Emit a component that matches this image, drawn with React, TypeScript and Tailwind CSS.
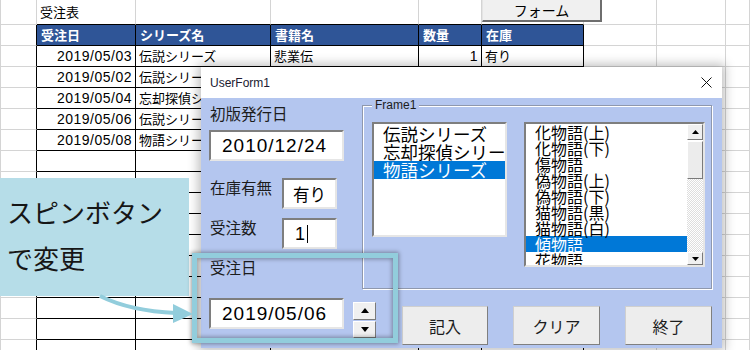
import React from 'react';

const HEADER = ['受注日', 'シリーズ名', '書籍名', '数量', '在庫'];
const DATA = [
  ['2019/05/03', '伝説シリーズ', '悲業伝', '1', '有り'],
  ['2019/05/02', '伝説シリーズ', '悲報伝', '2', '有り'],
  ['2019/05/04', '忘却探偵シリーズ', '掟上今日子の備忘録', '1', '有り'],
  ['2019/05/06', '伝説シリーズ', '悲鳴伝', '1', '有り'],
  ['2019/05/08', '物語シリーズ', '化物語(上)', '3', '有り'],
];
const SERIES = ['伝説シリーズ', '忘却探偵シリーズ', '物語シリーズ'];
const BOOKS = ['化物語(上)', '化物語(下)', '傷物語', '偽物語(上)', '偽物語(下)', '猫物語(黒)', '猫物語(白)', '傾物語', '花物語'];

const ROWS = Array.from({ length: 17 }, (_, i) => i);
const COLS = Array.from({ length: 9 }, (_, i) => i);

const sunken = 'border-2 border-t-[#7e7e7e] border-l-[#7e7e7e] border-r-[#e6e6e6] border-b-[#e6e6e6]';
const raised = 'border border-t-white border-l-white border-r-[#7a7a7a] border-b-[#7a7a7a]';
const BODY_BG = 'bg-[#b4c6ef]';

// one cell of the worksheet behind the form
const SheetCell = ({ r, c }: { r: number; c: number }) => {
  const rightBlack = r >= 1 && c <= 5;
  const bottomBlack = c >= 1 && c <= 5;
  const isHeader = r === 1 && c >= 1 && c <= 5;

  let text = '';
  if (r === 0 && c === 1) text = '受注表';
  if (isHeader) text = HEADER[c - 1];
  if (r >= 2 && r <= 6 && c >= 1 && c <= 5) text = DATA[r - 2][c - 1];

  const alignRight = r >= 2 && (c === 1 || c === 4);
  const digits = r >= 2 && (c === 1 || c === 4);

  return (
    <div
      className={`border-r border-b overflow-hidden whitespace-nowrap flex items-center ${
        rightBlack ? 'border-r-black' : 'border-r-[#d4d4d4]'
      } ${bottomBlack ? 'border-b-black' : 'border-b-[#d4d4d4]'} ${c === 0 ? 'border-l border-l-[#d4d4d4]' : ''} ${
        isHeader ? 'bg-[#2f5597] text-white font-bold pl-[4px] text-[13px]' : ''
      } ${alignRight ? 'justify-end pr-[3px]' : 'pl-[3px]'} ${
        digits ? "font-['Liberation_Sans',sans-serif] text-[14px] tracking-[0.5px]" : 'text-[13px]'
      }`}
    >
      {text}
    </div>
  );
};

const Triangle = ({ down = false, w = 8, h = 5 }: { down?: boolean; w?: number; h?: number }) => (
  <svg width={w} height={h} viewBox={`0 0 ${w} ${h}`}>
    <path d={down ? `M0 0H${w}L${w / 2} ${h}Z` : `M0 ${h}H${w}L${w / 2} 0Z`} fill="#000" />
  </svg>
);

const Label = ({ children, className = '' }: { children: React.ReactNode; className?: string }) => (
  <span className={`text-[15.5px] leading-[20px] text-[#1c1c1c] pl-px ${className}`}>{children}</span>
);

const Scrollbar = () => (
  <div className="w-[16px] h-full flex flex-col shrink-0">
    <div className={`h-[16px] bg-[#f0f0f0] ${raised} flex items-center justify-center`}>
      <Triangle w={7} h={4} />
    </div>
    <div className={`h-[38px] mt-px bg-[#ececec] ${raised}`} />
    <div className="flex-1 bg-[repeating-conic-gradient(#dedede_0%_25%,#ffffff_0%_50%)] bg-[length:2px_2px]" />
    <div className={`h-[13px] bg-[#f0f0f0] ${raised} flex items-center justify-center`}>
      <Triangle down w={7} h={4} />
    </div>
  </div>
);

const UserForm = () => (
  <div className="absolute left-[201px] top-[67px] w-[521px] h-[281px] flex flex-col bg-white shadow-[0_0_10px_3px_rgba(0,0,0,0.25)]">
    {/* title bar */}
    <div className="h-[31px] shrink-0 flex items-center justify-between pl-[9px] pr-[10px]">
      <span className="font-['Liberation_Sans',sans-serif] text-[12px] text-[#201a30]">UserForm1</span>
      <svg width="11" height="11" viewBox="0 0 11 11">
        <path d="M0.5 0.5L10.5 10.5M10.5 0.5L0.5 10.5" stroke="#111" strokeWidth="1" />
      </svg>
    </div>

    {/* body */}
    <div className={`flex-1 flex ${BODY_BG}`}>
      {/* left controls */}
      <div className="w-[161px] shrink-0 pl-[8px] pt-[5px] flex flex-col items-start">
        <Label>初版発行日</Label>
        <div className={`mt-[7px] w-[135px] h-[31px] bg-white ${sunken} pl-[11px] flex items-center font-['Liberation_Sans',sans-serif] text-[19px] leading-[22px] tracking-[1px]`}>
          2010/12/24
        </div>

        <div className="mt-[17px] flex items-start">
          <Label className="w-[73px] -mt-px">在庫有無</Label>
          <div className={`w-[55px] h-[31px] bg-white ${sunken} pl-[9px] flex items-center text-[16.5px] leading-[20px]`}>有り</div>
        </div>

        <div className="mt-[9px] flex items-start">
          <Label className="w-[73px] -mt-px">受注数</Label>
          <div className={`w-[55px] h-[31px] bg-white ${sunken} pl-[11px] flex items-center font-['Liberation_Sans',sans-serif] text-[18px] leading-[20px]`}>
            1<span className="ml-[2px] w-px h-[18px] bg-black" />
          </div>
        </div>

        <Label className="mt-[8px]">受注日</Label>

        <div className="mt-[21px] flex items-start">
          <div className={`w-[135px] h-[31px] bg-white ${sunken} pl-[11px] flex items-center font-['Liberation_Sans',sans-serif] text-[19px] leading-[22px] tracking-[1px]`}>
            2019/05/06
          </div>
          <div className="ml-[9px] mt-[4px] w-[23px] h-[36px] flex flex-col gap-px shrink-0">
            <div className={`flex-1 bg-[#f0f0f0] ${raised} flex items-center justify-center`}>
              <Triangle />
            </div>
            <div className={`flex-1 bg-[#f0f0f0] ${raised} flex items-center justify-center`}>
              <Triangle down />
            </div>
          </div>
        </div>
      </div>

      {/* frame + buttons */}
      <div className="flex-1 pr-[10px] flex flex-col">
        <div className="relative mt-[7px] h-[184px] border border-[#8f98ad] shadow-[inset_1px_1px_0_#ffffff,1px_1px_0_#ffffff] pt-[16px] pl-[9px] flex items-start">
          <span className={`absolute left-[9px] -top-[8px] px-[3px] ${BODY_BG} font-['Liberation_Sans',sans-serif] text-[12px] leading-[14px] text-[#1c1c1c]`}>
            Frame1
          </span>

          <div className={`w-[135px] h-[115px] bg-white ${sunken} overflow-hidden pt-px`}>
            {SERIES.map((s, i) => (
              <div
                key={s}
                className={`h-[18px] leading-[18px] text-[17.5px] pl-[9px] whitespace-nowrap ${
                  i === 2 ? 'bg-[#0078d7] text-white' : 'text-black'
                }`}
              >
                {s}
              </div>
            ))}
          </div>

          <div className={`ml-[17px] w-[181px] h-[145px] bg-white ${sunken} flex overflow-hidden`}>
            <div className="flex-1 overflow-hidden">
              {BOOKS.map((b, i) => (
                <div
                  key={b}
                  className={`h-[16px] leading-[16px] text-[16px] pl-[9px] whitespace-nowrap ${
                    i === 7 ? 'bg-[#0078d7] text-white' : 'text-black'
                  }`}
                >
                  {b}
                </div>
              ))}
            </div>
            <Scrollbar />
          </div>
        </div>

        <div className="mt-[17px] flex justify-end gap-[25px]">
          {['記入', 'クリア', '終了'].map((t, i) => (
            <button
              key={t}
              className={`${i === 0 ? 'w-[86px]' : 'w-[87px]'} h-[39px] bg-[#ededed] border border-[#cfcfcf] border-r-[#7f7f7f] border-b-[#7f7f7f] text-[16px] text-[#1c1c1c] flex items-center justify-center`}
            >
              {t}
            </button>
          ))}
        </div>
      </div>
    </div>
  </div>
);

export default function App() {
  return (
    <div className="relative w-[750px] h-[350px] overflow-hidden bg-white text-black font-['Noto_Sans_CJK_JP',sans-serif]">
      {/* worksheet */}
      <div className="grid grid-cols-[37px_99px_135px_148px_63px_102px_73px_69px_1fr] grid-rows-[25px_repeat(16,21px)]">
        {ROWS.map(r => COLS.map(c => <SheetCell key={`${r}-${c}`} r={r} c={c} />))}
      </div>

      {/* sheet button */}
      <button className="absolute left-[482px] -top-[2px] w-[120px] h-[24px] bg-[#f0f0f0] border border-l-[#e4e4e4] border-t-[#e4e4e4] border-r-[#6e6e6e] border-b-[#6e6e6e] border-r-2 border-b-2 text-[14px] flex items-center justify-center pt-[2px]">
        フォーム
      </button>

      <UserForm />

      {/* callout */}
      <div className="absolute left-0 top-[178px] w-[189px] h-[118px] bg-[#b6dde8] pl-[7px] pt-[11px] text-[26px] leading-[46px] text-[#161616]">
        <div>スピンボタン</div>
        <div>で変更</div>
      </div>

      {/* highlight around the spin control */}
      <div className="absolute left-[192px] top-[253px] w-[206px] h-[90px] border-[5px] border-[#92cddc] shadow-[0_0_4px_1px_rgba(0,0,0,0.35),inset_0_0_4px_1px_rgba(0,0,0,0.35)]" />

      {/* arrow */}
      <svg className="absolute left-0 top-0 pointer-events-none" width="750" height="350" viewBox="0 0 750 350">
        <path d="M100 296 Q 130 311 176 313" stroke="#92cddc" strokeWidth="4" fill="none" />
        <path d="M173 304 L193 314 L173 323 Z" fill="#92cddc" />
      </svg>
    </div>
  );
}
